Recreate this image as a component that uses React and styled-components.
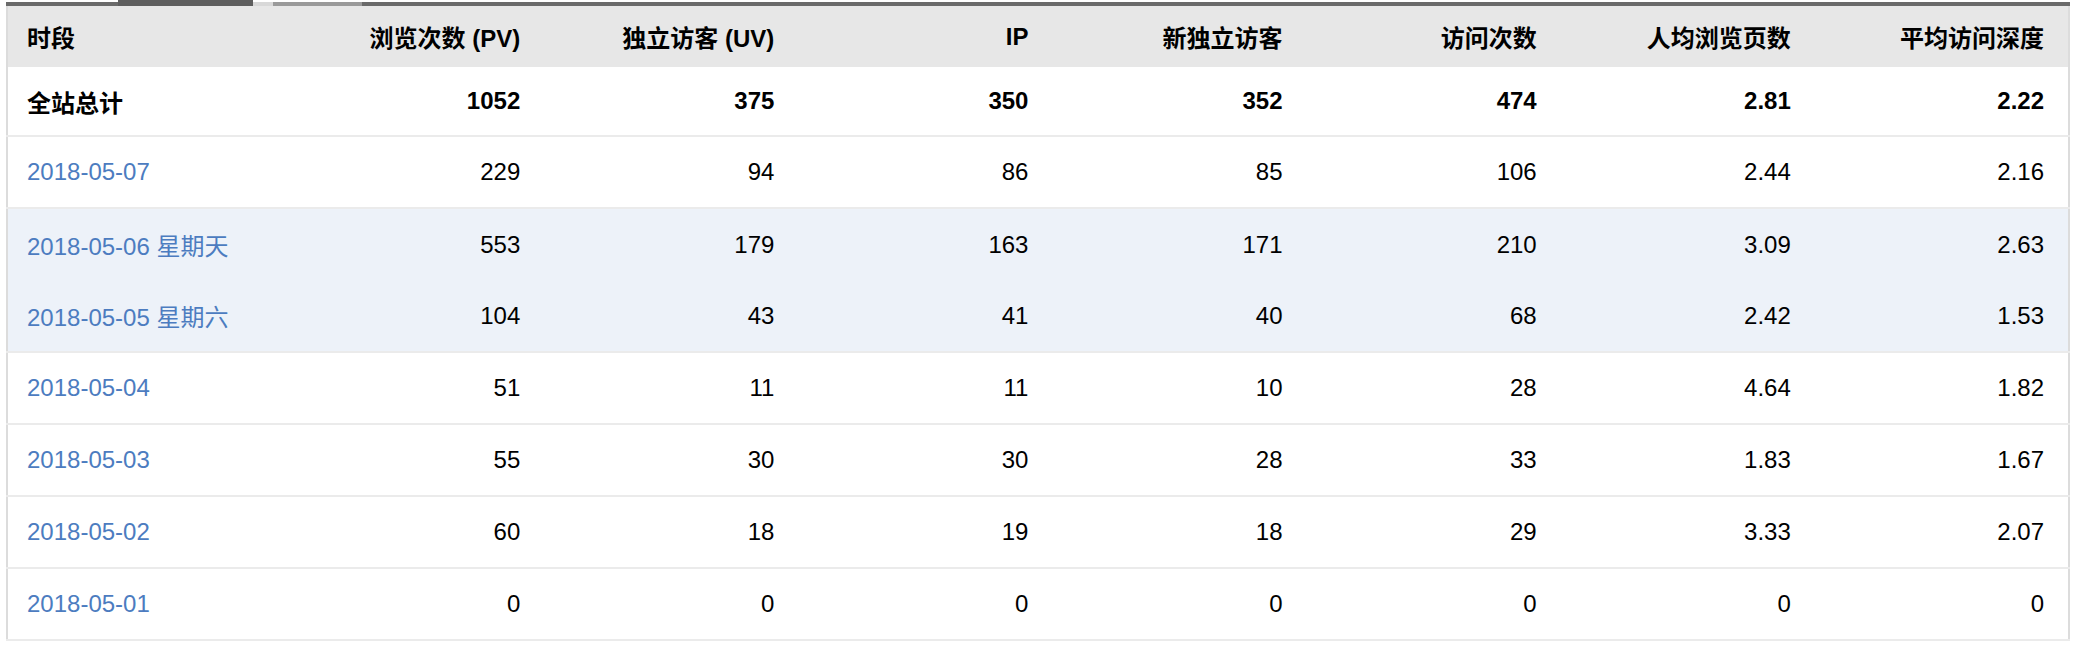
import React from 'react';
import styled, {createGlobalStyle} from 'styled-components';

const GlobalStyle = createGlobalStyle`
  html, body {
    margin: 0;
    padding: 0;
    background: #ffffff;
  }
  body {
    width: 2090px;
    height: 646px;
    overflow: hidden;
    font-family: "Liberation Sans", Arial, "Noto Sans CJK SC", sans-serif;
  }
`;

const Page = styled.div`
  padding-left: 6px;
  width: 2064px;
`;

const TabStrip = styled.div`
  display: flex;
  align-items: flex-end;
  height: 6px;
`;

const TabSegment = styled.div`
  width: ${p => p.w}px;
  height: ${p => p.h}px;
  background: ${p => p.bg};
  flex: ${p => (p.grow ? 1 : 'none')};
`;

const Table = styled.table`
  width: 2064px;
  table-layout: fixed;
  border-collapse: collapse;
  border-left: 2px solid #dcdcdc;
  border-right: 2px solid #dcdcdc;
  font-size: 24px;
  color: #000;
`;

const HeadRow = styled.tr`
  height: 61px;
  background: #e7e7e7;
`;

const HeadCell = styled.th`
  font-weight: bold;
  text-align: ${p => (p.left ? 'left' : 'right')};
  padding: ${p => (p.left ? '0 0 0 19px' : '0 24px 0 0')};
  white-space: nowrap;
`;

const Row = styled.tr`
  height: ${p => p.h}px;
  background: ${p => (p.hl ? '#edf2f9' : '#ffffff')};
  border-bottom: ${p => (p.hl && !p.lastHl ? 'none' : '2px solid #ebebeb')};
  font-weight: ${p => (p.total ? 'bold' : 'normal')};
`;

const Cell = styled.td`
  text-align: right;
  padding: 0 24px 0 0;
  white-space: nowrap;
`;

const DateCell = styled.td`
  text-align: left;
  padding: 0 0 0 19px;
  white-space: nowrap;
  color: ${p => (p.link ? '#4c7cc0' : '#000')};
`;

const columns = ['浏览次数 (PV)', '独立访客 (UV)', 'IP', '新独立访客', '访问次数', '人均浏览页数', '平均访问深度'];

const rows = [
  {label: '全站总计', values: ['1052', '375', '350', '352', '474', '2.81', '2.22'], total: true},
  {label: '2018-05-07', values: ['229', '94', '86', '85', '106', '2.44', '2.16']},
  {label: '2018-05-06 星期天', values: ['553', '179', '163', '171', '210', '3.09', '2.63'], hl: true},
  {label: '2018-05-05 星期六', values: ['104', '43', '41', '40', '68', '2.42', '1.53'], hl: true, lastHl: true},
  {label: '2018-05-04', values: ['51', '11', '11', '10', '28', '4.64', '1.82']},
  {label: '2018-05-03', values: ['55', '30', '30', '28', '33', '1.83', '1.67']},
  {label: '2018-05-02', values: ['60', '18', '19', '18', '29', '3.33', '2.07']},
  {label: '2018-05-01', values: ['0', '0', '0', '0', '0', '0', '0']},
];

const App = () => {
  return (
    <Page>
      <GlobalStyle />
      <TabStrip>
        <TabSegment w={112} h={4} bg="#6a6a6a" />
        <TabSegment w={135} h={6} bg="#5e5e5e" />
        <TabSegment w={20} h={4} bg="#d8d8d8" />
        <TabSegment w={89} h={4} bg="#9a9a9a" />
        <TabSegment grow h={4} bg="#6a6a6a" />
      </TabStrip>
      <Table>
        <colgroup>
          <col style={{width: 283}} />
          {columns.map(c => <col key={c} style={{width: 254}} />)}
        </colgroup>
        <thead>
          <HeadRow>
            <HeadCell left>时段</HeadCell>
            {columns.map(c => <HeadCell key={c}>{c}</HeadCell>)}
          </HeadRow>
        </thead>
        <tbody>
          {rows.map((r, i) => (
            <Row key={r.label} h={i === 0 ? 69 : 72} hl={r.hl} lastHl={r.lastHl} total={r.total}>
              <DateCell link={!r.total}>{r.label}</DateCell>
              {r.values.map((v, j) => <Cell key={j}>{v}</Cell>)}
            </Row>
          ))}
        </tbody>
      </Table>
    </Page>
  );
};

export default App;
